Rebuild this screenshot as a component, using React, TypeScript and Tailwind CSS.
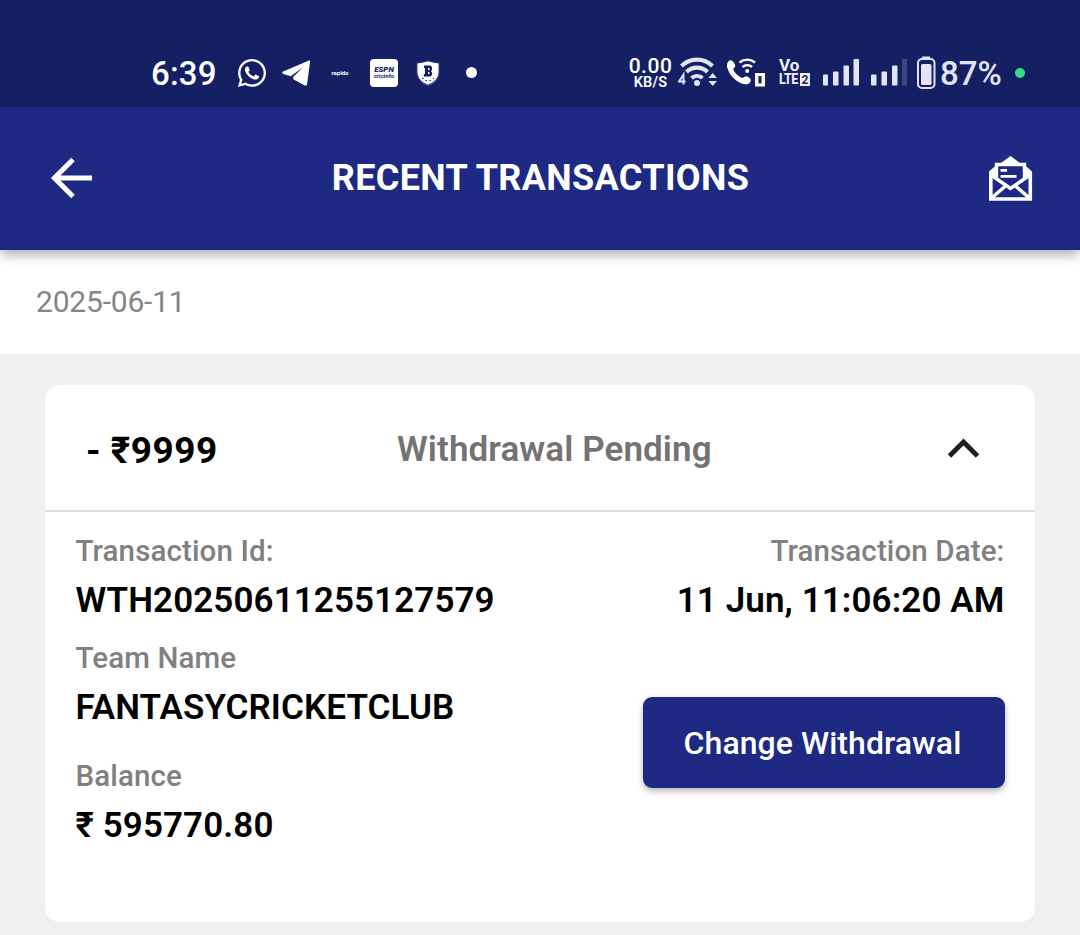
import React from "react";
import { FaWhatsapp } from "react-icons/fa";

function StatusBar() {
  return (
    <div className="relative z-20 flex h-[107px] items-center bg-[#151f63] pt-[38px] pl-[151px] text-white">
      <div className="w-[86px] pt-[2px] text-[33px] leading-[40px] font-medium tracking-[0.2px]">6:39</div>
      <FaWhatsapp className="h-[32px] w-[30px] shrink-0" />
      <svg className="ml-[14px] shrink-0" width="31" height="28" viewBox="0 0 31 28">
        <path d="M28 1.600 2.200 12.600c-1.400.7-1.200 1.800.1 2.300l7.400 2.400L22 8.200 12.100 18l.2 2.200 11 6c1.600.8 2.500.3 2.800-1.200L29 3c.3-1.300-.200-1.700-1-1.400Z" fill="#fff" />
      </svg>
      <div className="ml-[18px] w-[20px] text-center text-[6px] leading-[10px] font-bold">rapido</div>
      <div className="ml-[20px] flex h-[28px] w-[28px] shrink-0 flex-col items-center justify-center rounded-[4px] bg-white text-[#151f63]">
        <span className="h-[6px] text-[8px] leading-[6px] font-black italic">ESPN</span>
        <span className="h-[5px] text-[6px] leading-[5px] font-bold">cricinfo</span>
      </div>
      <svg className="ml-[17px] shrink-0" width="26" height="28" viewBox="0 0 26 28">
        <path d="M1.500 3.800Q8 3 13 1.500 18 3 24.500 3.800V13C24.500 20 19 25.500 13 27 7 25.500 1.500 20 1.500 13Z" fill="#3d4684" />
        <path d="M2.500 4.500Q8 4 13 2.500 18 4 23.500 4.500V13C23.500 19 18.500 24 13 25.500 7.500 24 2.500 19 2.500 13Z" fill="#fff" />
        <path fillRule="evenodd" d="M9 6.500h6.500l1.500 1.500v3l-1 1 1 1.500v2.500l-1.500 1.500H9v-2.500h1V9H9Zm4 2.500v2h1.500V9Zm0 4v2h1.500v-2Z" fill="#151f63" />
        <path d="M7 19.500h1.500m2 2H12m2.500 0H16m2-2h1" stroke="#151f63" strokeWidth="1.200" />
      </svg>
      <div className="ml-[25px] h-[11px] w-[11px] shrink-0 rounded-full bg-white" />
      <div className="ml-[150px] flex w-[47px] shrink-0 flex-col items-center pt-[2px]">
        <span className="h-[16px] text-[21px] leading-[16px] font-medium tracking-[0.500px]">0.00</span>
        <span className="h-[16px] text-[14.500px] leading-[17px] font-semibold tracking-[0.200px]">KB/S</span>
      </div>
      <svg className="ml-[4px] shrink-0" width="40" height="34" viewBox="0 0 40 34">
        <g fill="none" stroke="#e2e4f5" strokeWidth="4.200">
          <path d="M3.500 10a22 22 0 0 1 31 0" />
          <path d="M8.500 16a15 15 0 0 1 21 0" />
          <path d="M13.500 22a8.500 8.500 0 0 1 11 0" />
        </g>
        <circle cx="19" cy="27" r="3" fill="#e2e4f5" />
        <path d="m34.700 17 4.300 5h-8.600Zm0 13 4.300-5h-8.600Z" fill="#e2e4f5" />
        <path d="M5.500 28.500V18.500L1 25.500h6.500" fill="none" stroke="#e2e4f5" strokeWidth="1.900" />
      </svg>
      <svg className="ml-[8px] shrink-0" width="41" height="34" viewBox="0 0 41 34">
        <path d="M3.500 4.500C6 3 8.500 7 9.300 9.500 9.800 11 7.500 12 7.300 13.200 8.500 17 12.500 20.500 16.500 22 18.500 21 19.500 20 21 20.500 24 21.500 26 24 24 26.500 21 30 15.500 28 11 25 6 21.500 2 16 1 10.500.7 8 1.500 5.500 3.500 4.500Z" fill="#fff" />
        <g fill="none" stroke="#fff" strokeWidth="2.400"><path d="M13.500 6.500a12 12 0 0 1 15.500 0" /><path d="M16.500 11a7.500 7.500 0 0 1 9.500 0" /></g>
        <circle cx="21.200" cy="15" r="2" fill="#fff" />
        <path fillRule="evenodd" d="M29 17H39V30.500H29Zm3.500 3v7.500H35.500v-7.500Z" fill="#fff" />
      </svg>
      <div className="ml-[12px] flex w-[32px] shrink-0 flex-col text-[#f0f1fc]">
        <span className="h-[13px] text-[17px] leading-[13px] font-bold">Vo</span>
        <div className="flex h-[14px] items-center">
          <span className="w-[21px] origin-left scale-x-[.84] text-[15px] leading-[14px] font-bold tracking-[-0.600px]">LTE</span>
          <span className="h-[13px] w-[10px] bg-[#f0f1fc] text-center text-[12px] leading-[14px] font-bold text-[#151f63]">2</span>
        </div>
      </div>
      <svg className="ml-[12px] shrink-0" width="86" height="28" viewBox="0 0 86 28" fill="#e2e4f5">
        <rect x="0" y="15.500" width="5" height="11" rx="1" />
        <rect x="10" y="12.500" width="5.500" height="14" rx="1" />
        <rect x="20.500" y="6.500" width="5.500" height="20" rx="1" />
        <rect x="30.500" y="0" width="5.500" height="26.500" rx="1" />
        <rect x="48" y="15.500" width="5.500" height="11" rx="1" />
        <rect x="58.500" y="12.500" width="5.500" height="14" rx="1" />
        <rect x="69" y="6.500" width="5.500" height="20" rx="1" />
        <rect x="79" y="0" width="5" height="26.500" rx="1" opacity=".2" />
      </svg>
      <svg className="ml-[8px] shrink-0" width="19" height="34" viewBox="0 0 19 34">
        <path d="M5 .5h8v2H5Z" fill="#e2e4f5" />
        <rect x="1" y="3" width="16.500" height="29" rx="4" fill="none" stroke="#e2e4f5" strokeWidth="2" />
        <rect x="4" y="8" width="10.500" height="21" rx="1.500" fill="#e2e4f5" />
      </svg>
      <div className="ml-[4px] w-[75px] shrink-0 pt-[2px] text-[33px] leading-[40px] font-medium text-[#e2e4f5]">87%</div>
      <div className="h-[10px] w-[10px] shrink-0 rounded-full bg-[#36dc83]" />
    </div>
  );
}

function Header() {
  return (
    <header className="relative z-10 flex h-[142.500px] items-center justify-between bg-[#1d2983] pr-[47px] pl-[49px] text-white shadow-[0_4px_12px_rgba(0,0,0,0.350)]">
      <svg width="44" height="44" viewBox="0 0 44 44" fill="none" stroke="#fff" strokeWidth="5">
        <path d="M43 22H5M24 3.500 5.500 22 24 40.500" />
      </svg>
      <h1 className="text-[36px] leading-[42px] font-bold tracking-[0.360px] whitespace-nowrap">RECENT TRANSACTIONS</h1>
      <svg width="45" height="48" viewBox="0 0 45 48" fill="none" stroke="#fff">
        <path d="M2.800 18v27h39.500V18" strokeWidth="3.600" />
        <path d="M8.500 24V10.500h28V24" strokeWidth="3.400" />
        <path d="M13 9.500 22.500 2.500l9.500 7Z" fill="#fff" strokeWidth="1" />
        <path d="M1.500 17.500 8 12v12L3 21Zm42 0L37 12v12l5-3Z" fill="#fff" strokeWidth="1" />
        <path d="m3 21 19.500 13.500 19.500-13.500M3 44.500l14.500-12.500M42 44.500l-14.500-12.500" strokeWidth="3.400" />
        <path d="M12.500 16.300h6.500M12.500 22.300h16" strokeWidth="2.800" />
      </svg>
    </header>
  );
}

function Label({ children }: { children: React.ReactNode }) {
  return <div className="h-10 text-[29.500px] leading-10 font-[460] tracking-[0.120px] whitespace-nowrap text-[#808080]">{children}</div>;
}

function Value({ children }: { children: React.ReactNode }) {
  return <div className="mt-[9px] h-10 pt-px text-[35px] leading-10 font-semibold tracking-[0.100px] whitespace-nowrap text-black">{children}</div>;
}

export default function App() {
  return (
    <div className="flex h-[935px] w-[1080px] flex-col overflow-hidden bg-[#f0f0f0] font-[Roboto,sans-serif]">
      <StatusBar />
      <Header />
      <div className="flex h-[104.500px] items-center bg-white pl-[36px] text-[30px] text-[#858585]">
        <span className="tracking-[-0.200px]">2025-06-11</span>
      </div>
      <main className="mx-[45px] mt-[31px] h-[537px] rounded-[15px] bg-white">
        <div className="flex h-[127px] items-center border-b-2 border-[#dedede] pr-[56px] pl-[41px] text-[35px] font-semibold">
          <div className="w-[311px] pt-[7px] text-[37px] font-bold tracking-[0.500px] text-black">- ₹9999</div>
          <div className="flex-1 pt-[5px] tracking-[0.100px] text-[#737373]">Withdrawal Pending</div>
          <svg width="32" height="22" viewBox="0 0 32 22" fill="none" stroke="#202022" strokeWidth="4.800">
            <path d="M2.500 19 16.500 5l14 14" />
          </svg>
        </div>
        <div className="flex justify-between pt-[19px] pr-[30.500px] pl-[30.500px]">
          <div>
            <Label>Transaction Id:</Label>
            <Value>WTH20250611255127579</Value>
            <div className="h-[18px]" />
            <Label>Team Name</Label>
            <Value>FANTASYCRICKETCLUB</Value>
            <div className="h-[29px]" />
            <Label>Balance</Label>
            <Value>₹ 595770.80</Value>
          </div>
          <div className="flex flex-col items-end">
            <Label>Transaction Date:</Label>
            <Value>11 Jun, 11:06:20 AM</Value>
            <button className="-mr-[0.500px] mt-[77px] h-[91px] w-[362px] rounded-[9px] bg-[#1d2983] pr-[3px] text-[32px] font-medium tracking-[0.050px] whitespace-nowrap text-white shadow-[0_3px_6px_rgba(0,0,0,0.300)]">
              Change Withdrawal
            </button>
          </div>
        </div>
      </main>
    </div>
  );
}
